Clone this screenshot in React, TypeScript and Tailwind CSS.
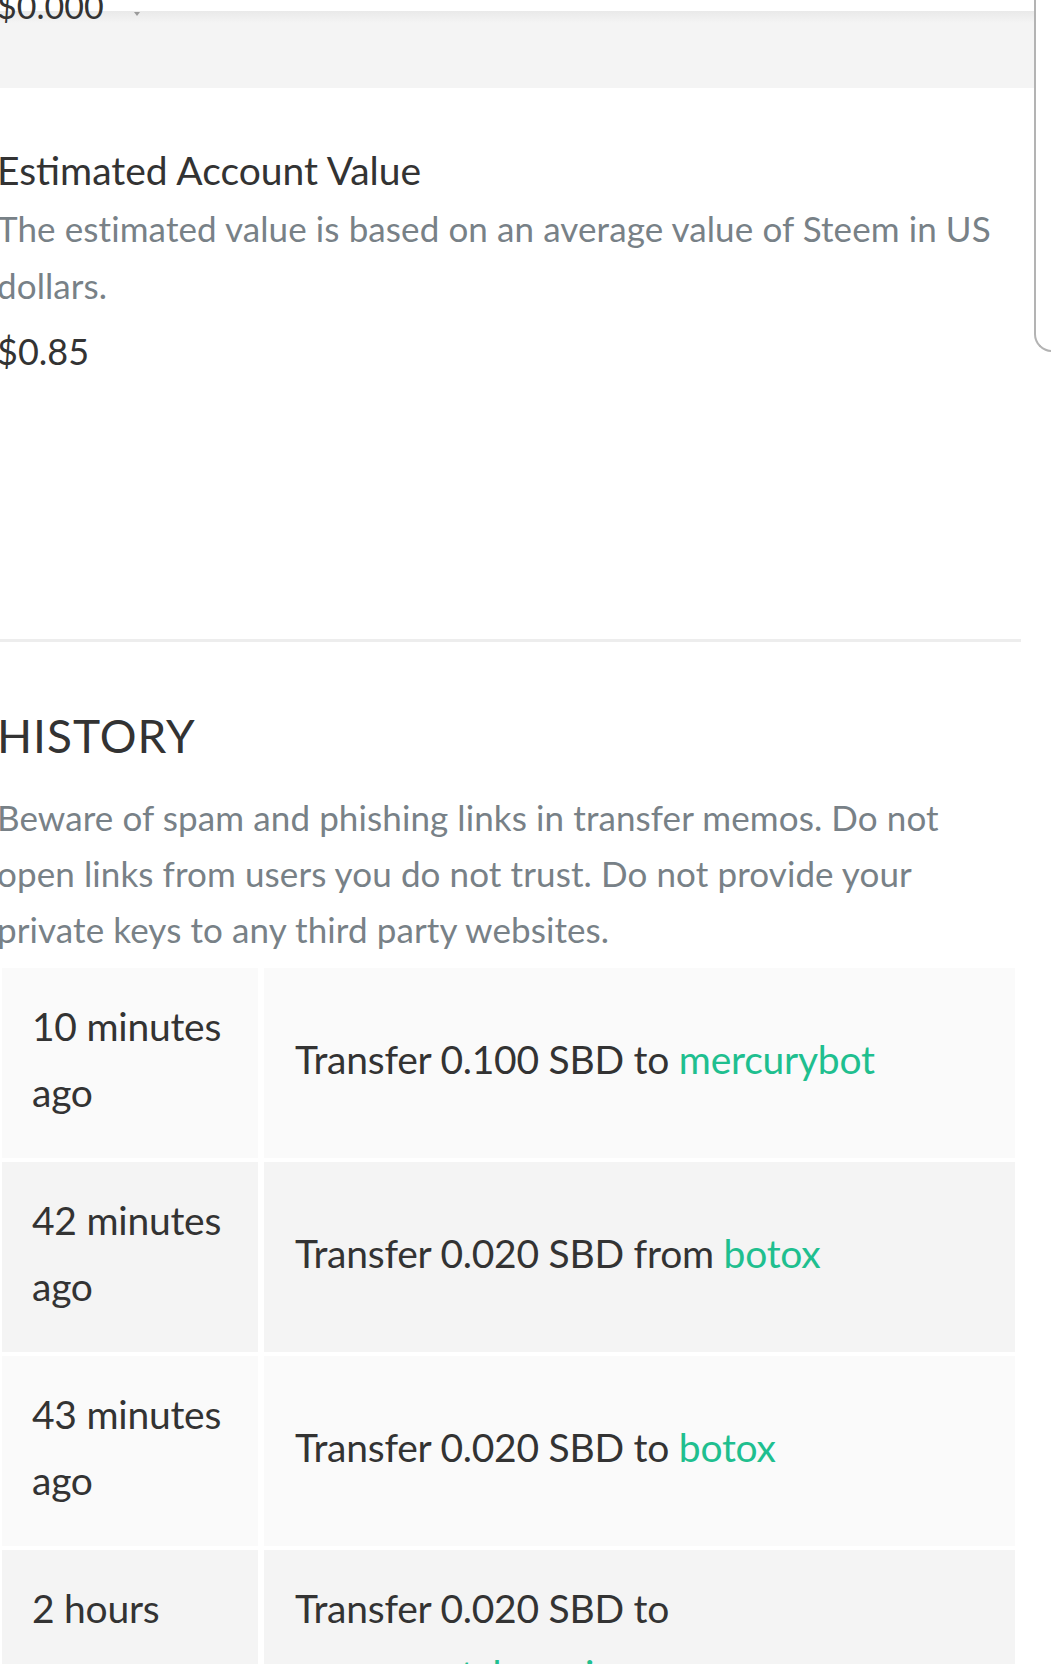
import React from 'react';

const rows = [
  { when: ['10 minutes', 'ago'], text: 'Transfer 0.100 SBD to', who: 'mercurybot', bg: 'bg-[#fafafa]' },
  { when: ['42 minutes', 'ago'], text: 'Transfer 0.020 SBD from', who: 'botox', bg: 'bg-[#f4f4f4]' },
  { when: ['43 minutes', 'ago'], text: 'Transfer 0.020 SBD to', who: 'botox', bg: 'bg-[#fafafa]' },
  { when: ['2 hours', 'ago'], text: 'Transfer 0.020 SBD to', who: 'moneymatchgaming', bg: 'bg-[#f4f4f4]', wrap: true },
];

export default function App() {
  return (
    <div className="relative w-[1051px] h-[1664px] overflow-hidden bg-white text-[#333] font-['Lato','Liberation_Sans',sans-serif]">
      {/* edge of the side panel */}
      <div className="absolute left-[1034px] top-[-20px] w-[60px] h-[372px] border-l-2 border-b-2 border-[#b3b3b3] rounded-bl-[18px]" />

      {/* previous wallet row */}
      <div className="h-[11px]" />
      <div className="flex items-start w-[1034px] h-[77px] bg-[linear-gradient(#e9e9e9,#f4f4f4_12px)]">
        <span className="-mt-[22px] -ml-[3px] text-[34px] leading-[34px]">$0.000</span>
        <svg className="mt-[1px] ml-[30px]" width="6" height="4" viewBox="0 0 6 4">
          <path d="M0 0h6L3 4z" fill="#9a9a9a" />
        </svg>
      </div>

      {/* estimated account value */}
      <div className="-ml-[3px] w-[1005px]">
        <p className="mt-[54px] text-[39px] leading-[57px]">Estimated Account Value</p>
        <p className="mt-[1px] text-[35px] leading-[57px] text-[#788187] tracking-[0.1px]">
          The estimated value is based on an average value of Steem in US dollars.
        </p>
        <p className="mt-[9px] text-[36px] leading-[57px]">$0.85</p>
      </div>

      <div className="mt-[259px] w-[1021px] h-[3px] bg-[#ededed]" />

      {/* history */}
      <div className="-ml-[3px] w-[1005px]">
        <h4 className="mt-[69px] text-[46px] leading-[50px] tracking-[1px]">HISTORY</h4>
        <p className="mt-[28px] text-[35px] leading-[56px] text-[#788187] tracking-[0.1px]">
          Beware of spam and phishing links in transfer memos. Do not open links from users you do not trust. Do not provide your private keys to any third party websites.
        </p>
      </div>

      <div className="mt-[11px] ml-[2px] w-[1013px] flex flex-col gap-[4px] text-[39px] leading-[66px] tracking-[-0.25px]">
        {rows.map((r, i) => (
          <div key={i} className="flex gap-[6px]">
            <div className={`w-[256px] shrink-0 pl-[30px] pt-[25px] pb-[33px] ${r.bg}`}>
              {r.when.map((w) => (
                <div key={w} className="whitespace-nowrap">{w}</div>
              ))}
            </div>
            <div className={`flex-1 pl-[31px] pr-[30px] pt-[25px] pb-[33px] flex ${r.wrap ? 'items-start' : 'items-center'} ${r.bg}`}>
              <div>
                {r.text}
                {r.wrap ? <br /> : ' '}
                <a className="text-[#1fbf8f]">{r.who}</a>
              </div>
            </div>
          </div>
        ))}
      </div>
    </div>
  );
}
